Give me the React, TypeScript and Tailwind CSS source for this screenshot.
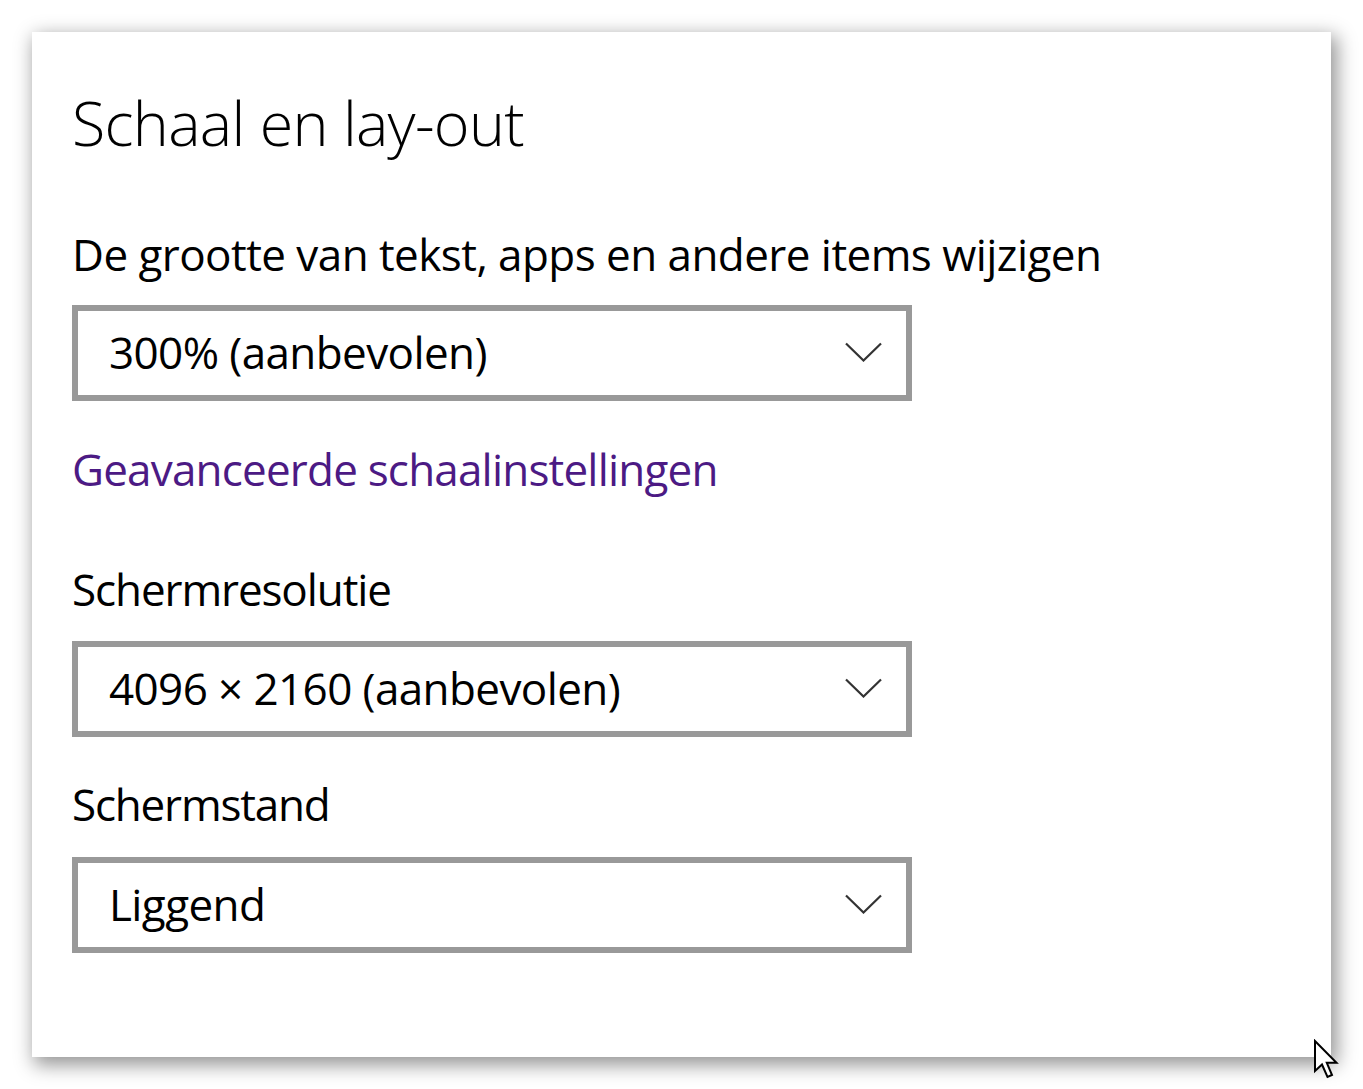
import React from "react";

function Chevron() {
  return (
    <svg width="37" height="20" viewBox="0 0 37 20" className="shrink-0">
      <path d="M1 1.5 L18.5 18.5 L36 1.5" fill="none" stroke="#333333" strokeWidth="2.2" />
    </svg>
  );
}

function Dropdown({ value, className }: { value: string; className: string }) {
  return (
    <div
      className={
        "w-[840px] h-[96px] border-[6px] border-[#999999] bg-white flex items-center justify-between pl-[31px] pr-[24px] pb-[2px] " +
        className
      }
    >
      <span className="text-[44px] leading-none tracking-[-0.6px] text-black whitespace-pre">{value}</span>
      <Chevron />
    </div>
  );
}

function Cursor() {
  return (
    <svg
      width="28"
      height="42"
      viewBox="0 0 28 42"
      className="absolute left-[1313px] top-[1039px]"
    >
      <path
        d="M2 2 L2 32 L9 25.5 L14.5 38 L19 36 L13.8 23.8 L23.5 23.8 Z"
        fill="white"
        stroke="black"
        strokeWidth="2"
        strokeLinejoin="miter"
      />
    </svg>
  );
}

export default function App() {
  return (
    <div
      className="relative w-[1363px] h-[1089px] bg-white overflow-hidden"
      style={{ fontFamily: '"Open Sans", "Noto Sans", sans-serif' }}
    >
      <div className="absolute left-[32px] top-[32px] w-[1299px] h-[1025px] bg-white shadow-[4px_6px_18px_2px_rgba(0,0,0,0.42)]">
        <div className="flex flex-col items-start pl-[40px] pt-[60px]">
          <h1 className="text-[61px] leading-none tracking-[-0.7px] text-black font-light">Schaal en lay-out</h1>
          <p className="mt-[79px] text-[44px] leading-none tracking-[-0.55px] text-black">
            De grootte van tekst, apps en andere items wijzigen
          </p>
          <Dropdown value="300% (aanbevolen)" className="mt-[29px]" />
          <p className="mt-[46px] text-[44px] leading-none tracking-[-0.8px] text-[#4c1a84]">
            Geavanceerde schaalinstellingen
          </p>
          <p className="mt-[76px] text-[44px] leading-none tracking-[-1.1px] text-black">Schermresolutie</p>
          <Dropdown value="4096 × 2160 (aanbevolen)" className="mt-[30px]" />
          <p className="mt-[45px] text-[44px] leading-none tracking-[-1.2px] text-black">Schermstand</p>
          <Dropdown value="Liggend" className="mt-[31px]" />
        </div>
      </div>
      <Cursor />
    </div>
  );
}
